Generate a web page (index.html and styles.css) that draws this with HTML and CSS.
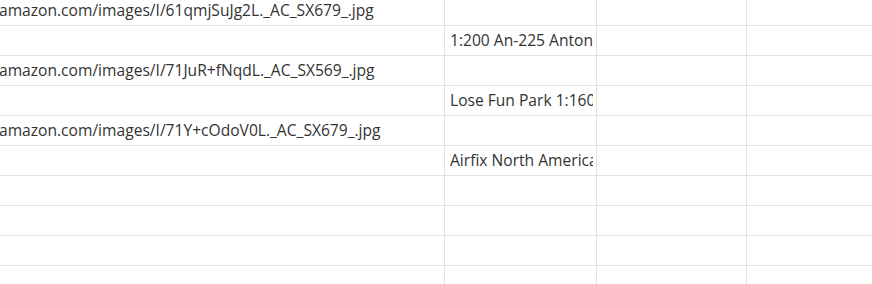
FILE: index.html
```html
<!DOCTYPE html>
<html>
<head>
<meta charset="utf-8">
<link rel="stylesheet" href="styles.css">
</head>
<body>
<div class="sheet">
  <div class="row"><div class="cell c1"><span class="url">amazon.com/images/I/61qmjSuJg2L._AC_SX679_.jpg</span></div><div class="cell c2"></div><div class="cell c3"></div><div class="cell c4"></div></div>
  <div class="row"><div class="cell c1"></div><div class="cell c2"><span class="clip">1:200 An-225 Antonov Mriya</span></div><div class="cell c3"></div><div class="cell c4"></div></div>
  <div class="row"><div class="cell c1"><span class="url">amazon.com/images/I/71JuR+fNqdL._AC_SX569_.jpg</span></div><div class="cell c2"></div><div class="cell c3"></div><div class="cell c4"></div></div>
  <div class="row"><div class="cell c1"></div><div class="cell c2"><span class="clip">Lose Fun Park 1:160</span></div><div class="cell c3"></div><div class="cell c4"></div></div>
  <div class="row"><div class="cell c1"><span class="url">amazon.com/images/I/71Y+cOdoV0L._AC_SX679_.jpg</span></div><div class="cell c2"></div><div class="cell c3"></div><div class="cell c4"></div></div>
  <div class="row"><div class="cell c1"></div><div class="cell c2"><span class="clip">Airfix North American</span></div><div class="cell c3"></div><div class="cell c4"></div></div>
  <div class="row"><div class="cell c1"></div><div class="cell c2"></div><div class="cell c3"></div><div class="cell c4"></div></div>
  <div class="row"><div class="cell c1"></div><div class="cell c2"></div><div class="cell c3"></div><div class="cell c4"></div></div>
  <div class="row"><div class="cell c1"></div><div class="cell c2"></div><div class="cell c3"></div><div class="cell c4"></div></div>
  <div class="row"><div class="cell c1"></div><div class="cell c2"></div><div class="cell c3"></div><div class="cell c4"></div></div>
</div>
</body>
</html>
```
FILE: styles.css
```css
html, body {
  margin: 0;
  padding: 0;
  background: #ffffff;
  overflow: hidden;
}
.sheet {
  margin-top: -4px;
  font-family: "Open Sans", "Noto Sans", sans-serif;
  font-size: 15.6px;
  color: #333333;
}
.row {
  display: flex;
  height: 29px;
  border-bottom: 1px solid #e2e2e2;
}
.cell {
  flex: none;
  height: 29px;
  line-height: 29px;
  white-space: nowrap;
  overflow: hidden;
  border-right: 1px solid #e2e2e2;
  box-sizing: content-box;
}
.c1 { width: 444px; }
.c2 { width: 143px; padding-left: 5px; padding-right: 3px; }
.c3 { width: 149px; }
.c4 { width: 200px; border-right: none; }
.url { margin-left: -1px; }
.clip {
  display: block;
  width: 143px;
  overflow: hidden;
}
```
